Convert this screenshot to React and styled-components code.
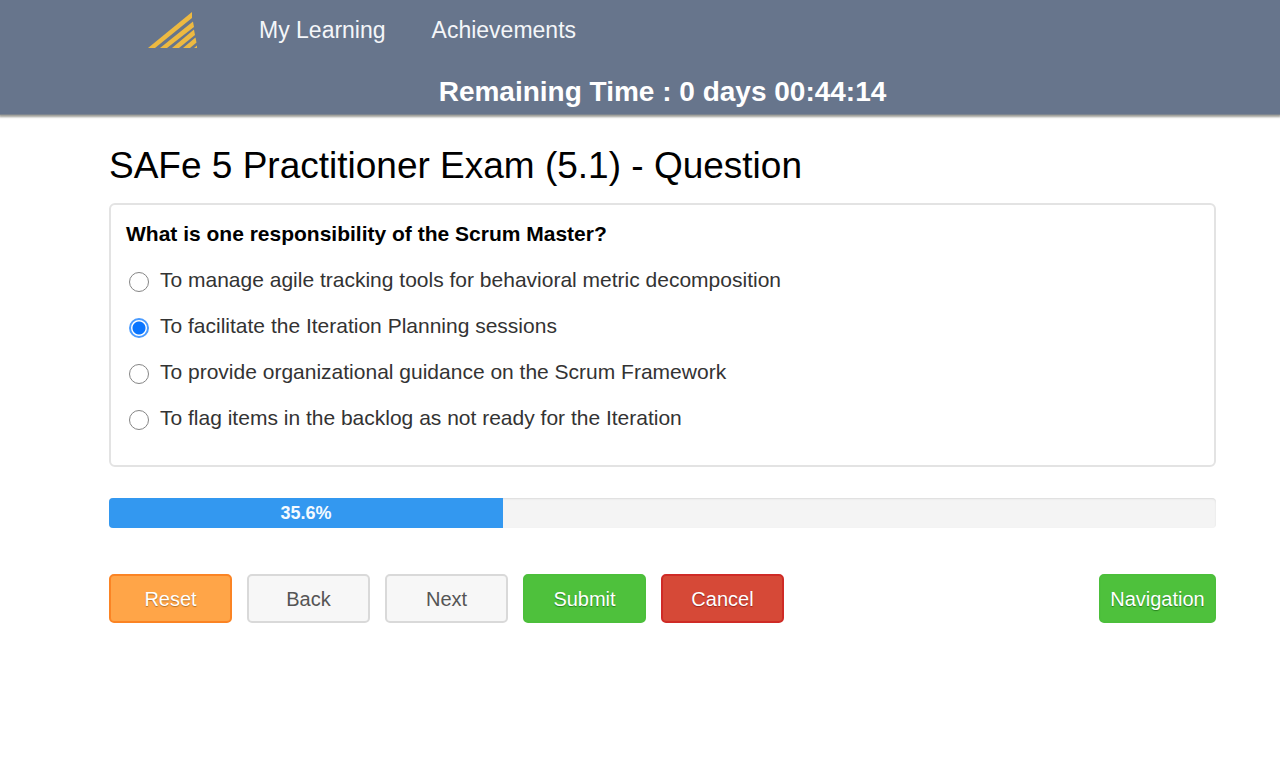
import React, { useState } from 'react';
import styled, { createGlobalStyle } from 'styled-components';

const GlobalStyle = createGlobalStyle`
  *, *::before, *::after { box-sizing: border-box; }
  body {
    margin: 0;
    background: #fff;
    color: #000;
    font-family: "Liberation Sans", Arial, Helvetica, sans-serif;
  }
`;

const Header = styled.header`
  background: #67758c;
  padding: 0 64px 0 109px;
  border-bottom: 1px solid #7d8590;
  box-shadow: 0 1px 2px 1px rgba(90, 90, 80, 0.6);
`;

const TopNav = styled.nav`
  display: flex;
  align-items: center;
  height: 60px;
  padding-left: 39px;
`;

const LogoLink = styled.a`
  display: flex;
  margin-right: 61px;
`;

const NavLink = styled.a`
  margin-right: 46px;
  color: #f4f6f9;
  font-size: 23px;
  line-height: 28px;
  text-decoration: none;
`;

const Timer = styled.div`
  height: 54px;
  padding-top: 16px;
  color: #fff;
  font-size: 28px;
  font-weight: 700;
  line-height: 32px;
  text-align: center;
`;

const Main = styled.main`
  padding: 26px 64px 40px 109px;
`;

const Title = styled.h1`
  margin: 0 0 12px;
  font-size: 37px;
  font-weight: 400;
  line-height: 50px;
`;

const QuestionCard = styled.fieldset`
  display: block;
  min-width: 0;
  margin: 0;
  padding: 14px 15px 24px;
  border: 2px solid #e3e3e3;
  border-radius: 6px;
`;

const QuestionText = styled.legend`
  float: left;
  width: 100%;
  margin-bottom: 8px;
  padding: 0;
  font-size: 21px;
  font-weight: 700;
  line-height: 30px;
`;

const OptionList = styled.div`
  clear: both;
`;

const Option = styled.label`
  display: flex;
  align-items: center;
  height: 46px;
  color: #333;
  font-size: 21px;
  line-height: 28px;
`;

const Radio = styled.input`
  appearance: none;
  flex: none;
  width: 20px;
  height: 20px;
  margin: 4px 11px 0 3px;
  border: 1px solid #858585;
  border-radius: 50%;
  background: #fff;

  &:checked {
    border: 2px solid #4a9bff;
    background: radial-gradient(circle, #0a75ff 0 6px, #fff 7px);
  }
`;

const ProgressTrack = styled.div`
  height: 30px;
  margin: 31px 0 46px;
  overflow: hidden;
  border-radius: 4px;
  background: #f4f4f4;
  box-shadow: inset 0 1px 2px rgba(0, 0, 0, 0.1);
`;

const ProgressFill = styled.div`
  height: 100%;
  background: #3398f0;
  color: #f4faff;
  font-size: 18px;
  font-weight: 700;
  line-height: 30px;
  text-align: center;
`;

const Actions = styled.div`
  display: flex;
  gap: 15px;
`;

const tones = {
  orange: { bg: '#ffa548', edge: '#fb8424', text: '#fff', shadow: 'rgba(110, 60, 0, 0.5)' },
  plain: { bg: '#f7f7f7', edge: '#d9d9d9', text: '#555', shadow: 'transparent' },
  green: { bg: '#4ec13c', edge: '#4cbf3b', text: '#fff', shadow: 'rgba(0, 70, 0, 0.5)' },
  red: { bg: '#d64937', edge: '#cf2b26', text: '#fff', shadow: 'rgba(90, 0, 0, 0.5)' },
};

const Button = styled.button`
  width: ${({ $wide }) => ($wide ? '117px' : '123px')};
  height: 49px;
  margin-left: ${({ $end }) => ($end ? 'auto' : '0')};
  padding: 0;
  border: 2px solid ${({ $tone }) => tones[$tone].edge};
  border-radius: 5px;
  background: ${({ $tone }) => tones[$tone].bg};
  color: ${({ $tone }) => tones[$tone].text};
  font-family: inherit;
  font-size: 20px;
  line-height: 28px;
  text-shadow: 0 1px 1px ${({ $tone }) => tones[$tone].shadow};
  cursor: pointer;
`;

const Logo = () => (
  <svg width="50" height="38" viewBox="0 0 50 38" fill="#edb941" aria-hidden="true">
    <path d="M0 37 L44 1 V7 L7 37Z" />
    <path d="M12 37 L45 10.500 L46 16 L19 37Z" />
    <path d="M24 37 L46 18.500 L47 24 L31 37Z" />
    <path d="M35 37 L47.500 26.500 L48.500 31.500 L42 37Z" />
    <path d="M46 37 L49 34.500 V37Z" />
  </svg>
);

const options = [
  'To manage agile tracking tools for behavioral metric decomposition',
  'To facilitate the Iteration Planning sessions',
  'To provide organizational guidance on the Scrum Framework',
  'To flag items in the backlog as not ready for the Iteration',
];

export default function App() {
  const [selected, setSelected] = useState(1);
  const progress = 35.6;

  return (
    <>
      <GlobalStyle />
      <Header>
        <TopNav>
          <LogoLink href="#home" aria-label="Home"><Logo /></LogoLink>
          <NavLink href="#learning">My Learning</NavLink>
          <NavLink href="#achievements">Achievements</NavLink>
        </TopNav>
        <Timer>Remaining Time : 0 days 00:44:14</Timer>
      </Header>
      <Main>
        <Title>SAFe 5 Practitioner Exam (5.1) - Question</Title>
        <QuestionCard>
          <QuestionText>What is one responsibility of the Scrum Master?</QuestionText>
          <OptionList>
            {options.map((text, i) => (
              <Option key={text}>
                <Radio type="radio" name="answer" checked={selected === i} onChange={() => setSelected(i)} />
                {text}
              </Option>
            ))}
          </OptionList>
        </QuestionCard>
        <ProgressTrack role="progressbar" aria-label="Exam progress" aria-valuenow={progress} aria-valuemin={0} aria-valuemax={100}>
          <ProgressFill style={{ width: `${progress}%` }}>{progress}%</ProgressFill>
        </ProgressTrack>
        <Actions>
          <Button type="button" $tone="orange">Reset</Button>
          <Button type="button" $tone="plain">Back</Button>
          <Button type="button" $tone="plain">Next</Button>
          <Button type="button" $tone="green">Submit</Button>
          <Button type="button" $tone="red">Cancel</Button>
          <Button type="button" $tone="green" $wide $end>Navigation</Button>
        </Actions>
      </Main>
    </>
  );
}
